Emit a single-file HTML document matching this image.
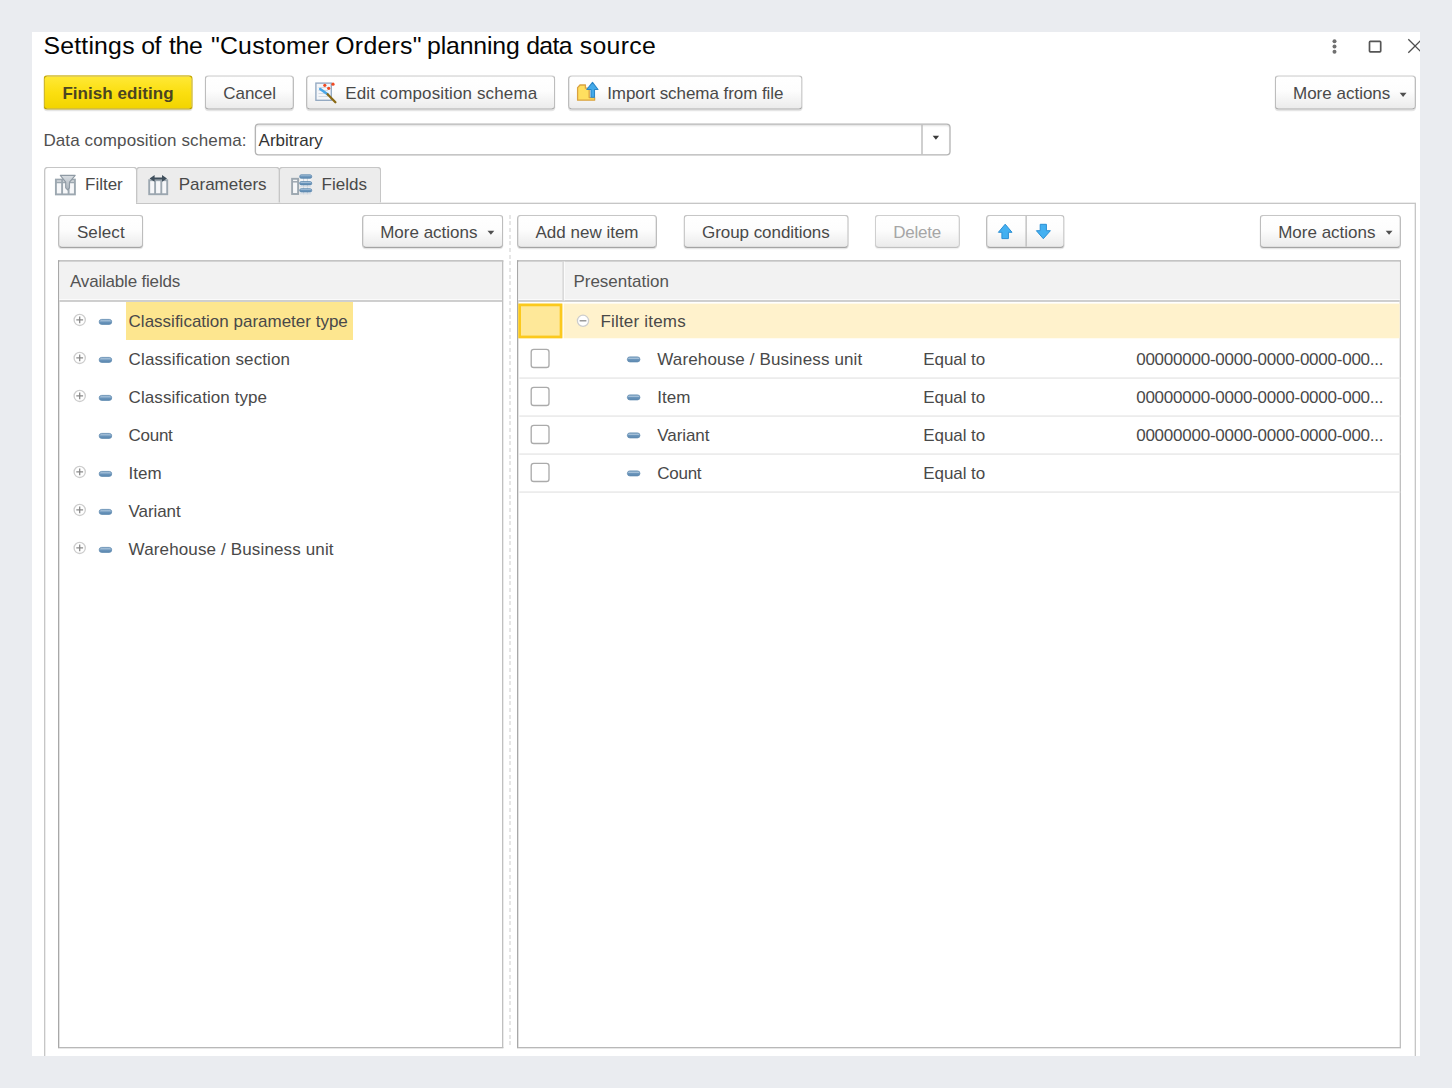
<!DOCTYPE html>
<html>
<head>
<meta charset="utf-8">
<title>Settings of the "Customer Orders" planning data source</title>
<style>
html,body{margin:0;padding:0;}
body{width:1452px;height:1088px;background:#eaecf0;overflow:hidden;position:relative;
  font-family:"Liberation Sans",sans-serif;font-size:17px;color:#494949;}
*{box-sizing:border-box;}
.abs{position:absolute;}
#win{position:absolute;left:32px;top:32px;width:1388px;height:1024px;background:#fff;overflow:hidden;}
#pg{position:absolute;left:-32px;top:-32px;width:1452px;height:1088px;}
#z{position:absolute;left:0;top:0;width:1089px;height:816px;transform:scale(1.3333333);transform-origin:0 0;}
#z>div{position:absolute;}
#tx{position:absolute;left:0;top:0;width:1452px;height:1088px;}
#ic{position:absolute;left:0;top:0;}
.t{position:absolute;white-space:nowrap;line-height:20px;height:20px;}
.t.b{font-weight:bold;}
.title{position:absolute;left:43.4px;top:30.6px;height:30px;line-height:30px;font-size:24.8px;color:#050505;white-space:nowrap;}
.title span{position:absolute;top:0;}
.btn{border:1px solid #bdbdbd;border-top-color:#c6c6c6;border-bottom-color:#a4a4a4;border-radius:3px;background:linear-gradient(#ffffff 0%,#fdfdfd 45%,#ebebeb 100%);box-shadow:0 1px 0.5px rgba(0,0,0,.10);}
.btn.yellow{background:linear-gradient(#ffe836 0%,#fbdf10 50%,#f2d400 100%);border-color:#c6a900;border-bottom-color:#b09500;}
.btn.dis{border-color:#cfcfcf;border-bottom-color:#c0c0c0;box-shadow:0 1px 0.5px rgba(0,0,0,.05);}
.input{border:1px solid #b4b4b4;border-radius:3px;background:#fff;box-shadow:inset 0 1px 1px rgba(0,0,0,.10);}
.tab{border:1px solid #c6c6c6;border-bottom:none;background:#ececec;border-radius:3px 3px 0 0;}
.tab.act{background:#fff;}
.panel{border:1px solid #c6c6c6;}
.tbl{border:1px solid #a8a8a8;border-right-color:#c0c0c0;border-bottom-color:#b8b8b8;background:#fff;}
.th{position:absolute;left:0;top:0;right:0;height:30px;background:#f2f2f2;border-bottom:1px solid #bcbcbc;box-shadow:inset 0 -1px 0 #fbfbfb;}
</style>
</head>
<body>
<div id="win"><div id="pg">
<div id="z">
<div class="btn yellow" style="left:32px;top:56px;width:112px;height:26px;transform:translate(0.6px,0.4px);"></div>
<div class="btn" style="left:153px;top:56px;width:67px;height:26px;transform:translate(0.5px,0.4px);"></div>
<div class="btn" style="left:229px;top:56px;width:187px;height:26px;transform:translate(0.5px,0.4px);"></div>
<div class="btn" style="left:426px;top:56px;width:176px;height:26px;transform:translate(0px,0.4px);"></div>
<div class="btn" style="left:956px;top:56px;width:106px;height:26px;transform:translate(0px,0.4px);"></div>
<div class="input" style="left:191px;top:92px;width:522px;height:24px;transform:translate(0px,0.6px);"><div class="abs" style="left:499px;top:0;width:1px;height:22px;background:#b8b8b8;"></div></div>
<div class="panel" style="left:33px;top:152px;width:1029px;height:700px;"></div>
<div class="tab act" style="left:33px;top:125px;width:70px;height:28px;"></div>
<div class="tab" style="left:102px;top:125px;width:108px;height:27px;"></div>
<div class="tab" style="left:209px;top:125px;width:77px;height:27px;"></div>
<div class="btn" style="left:43px;top:161px;width:64px;height:25px;transform:translate(0.5px,0px);"></div>
<div class="btn" style="left:271px;top:161px;width:106px;height:25px;transform:translate(0.5px,0px);"></div>
<div class="btn" style="left:387px;top:161px;width:105px;height:25px;transform:translate(0.75px,0px);"></div>
<div class="btn" style="left:512px;top:161px;width:124px;height:25px;transform:translate(0.6px,0px);"></div>
<div class="btn dis" style="left:656px;top:161px;width:64px;height:25px;"></div>
<div class="btn" style="left:739px;top:161px;width:59px;height:25px;transform:translate(0.5px,0px);"><div class="abs" style="left:28px;top:0;width:1px;height:23px;background:#bcbcbc;transform:translateX(0.6px);"></div></div>
<div class="btn" style="left:944px;top:161px;width:106px;height:25px;transform:translate(0.75px,0px);"></div>
<div class="tbl" style="left:43px;top:195px;width:334px;height:591px;transform:translate(0.5px,0.25px);"><div class="th"></div></div>
<div class="tbl" style="left:387px;top:195px;width:663px;height:591px;transform:translate(0.75px,0.25px);"><div class="th"><div class="abs" style="left:33px;top:0;width:2px;height:29px;background:linear-gradient(to right,#dadada 0,#dadada 50%,#fbfbfb 50%,#fbfbfb 100%);"></div></div><div class="abs" style="left:34px;top:31px;width:627px;height:26px;background:#fff2cc;transform:translateY(0.45px);"></div><div class="abs" style="left:0;top:31px;width:33px;height:26px;background:#fee899;border:2px solid #fbc91d;transform:translateY(0.45px);"></div></div>
<div class="abs" style="left:382px;top:161px;width:1px;height:625px;background:repeating-linear-gradient(to bottom,#dadada 0,#dadada 3px,transparent 3px,transparent 5px);"></div>
</div>
<div id="tx">
<div class="title"><span style="left:0.0px;letter-spacing:0.22px">Settings</span> <span style="left:97.8px;letter-spacing:-0.5px">of</span> <span style="left:125.7px;letter-spacing:-0.4px">the</span> <span style="left:167.5px;letter-spacing:0.26px">"Customer</span> <span style="left:291.9px;letter-spacing:0.28px">Orders"</span> <span style="left:383.7px;letter-spacing:-0.16px">planning</span> <span style="left:482.9px;letter-spacing:-0.7px">data</span> <span style="left:536.4px;letter-spacing:0.3px">source</span></div>
<div class="abs" style="left:126px;top:302px;width:227px;height:38px;background:#fde68f;"></div>
<div class="t b" style="left:62.4px;top:84px;letter-spacing:0.06px;color:#4b4522;">Finish editing</div>
<div class="t " style="left:223.2px;top:84px;">Cancel</div>
<div class="t " style="left:345.3px;top:84px;letter-spacing:0.13px;">Edit composition schema</div>
<div class="t " style="left:607.2px;top:84px;letter-spacing:-0.06px;">Import schema from file</div>
<div class="t " style="left:1293px;top:84px;">More actions</div>
<div class="t " style="left:43.4px;top:130.6px;letter-spacing:0.12px;color:#505050;">Data composition schema:</div>
<div class="t " style="left:258.6px;top:130.6px;color:#333;">Arbitrary</div>
<div class="t " style="left:85.0px;top:175.4px;">Filter</div>
<div class="t " style="left:178.7px;top:175.4px;">Parameters</div>
<div class="t " style="left:321.6px;top:175.4px;">Fields</div>
<div class="t " style="left:76.9px;top:223.2px;letter-spacing:0.1px;">Select</div>
<div class="t " style="left:380.2px;top:223.2px;">More actions</div>
<div class="t " style="left:535.5px;top:223.2px;">Add new item</div>
<div class="t " style="left:702px;top:223.2px;letter-spacing:-0.05px;">Group conditions</div>
<div class="t " style="left:893.3px;top:223.2px;letter-spacing:-0.27px;color:#a6a6a6;">Delete</div>
<div class="t " style="left:1278.2px;top:223.2px;">More actions</div>
<div class="t " style="left:70px;top:272.4px;letter-spacing:-0.19px;color:#545454;">Available fields</div>
<div class="t " style="left:573.4px;top:272.4px;color:#545454;">Presentation</div>
<div class="t " style="left:128.6px;top:312.4px;">Classification parameter type</div>
<div class="t " style="left:128.6px;top:350.4px;letter-spacing:0.13px;">Classification section</div>
<div class="t " style="left:128.6px;top:388.4px;letter-spacing:0.08px;">Classification type</div>
<div class="t " style="left:128.6px;top:426.4px;letter-spacing:-0.28px;">Count</div>
<div class="t " style="left:128.6px;top:464.4px;">Item</div>
<div class="t " style="left:128.6px;top:502.4px;letter-spacing:-0.08px;">Variant</div>
<div class="t " style="left:128.6px;top:540.4px;letter-spacing:0.14px;">Warehouse / Business unit</div>
<div class="t " style="left:600.4px;top:312px;letter-spacing:0.2px;">Filter items</div>
<div class="t " style="left:657.3px;top:349.6px;letter-spacing:0.14px;">Warehouse / Business unit</div>
<div class="t " style="left:923.2px;top:349.6px;letter-spacing:-0.05px;">Equal to</div>
<div class="t " style="left:1136.2px;top:349.6px;letter-spacing:-0.24px;">00000000-0000-0000-0000-000...</div>
<div class="t " style="left:657.3px;top:387.6px;">Item</div>
<div class="t " style="left:923.2px;top:387.6px;letter-spacing:-0.05px;">Equal to</div>
<div class="t " style="left:1136.2px;top:387.6px;letter-spacing:-0.24px;">00000000-0000-0000-0000-000...</div>
<div class="t " style="left:657.3px;top:425.6px;letter-spacing:-0.08px;">Variant</div>
<div class="t " style="left:923.2px;top:425.6px;letter-spacing:-0.05px;">Equal to</div>
<div class="t " style="left:1136.2px;top:425.6px;letter-spacing:-0.24px;">00000000-0000-0000-0000-000...</div>
<div class="t " style="left:657.3px;top:463.6px;letter-spacing:-0.28px;">Count</div>
<div class="t " style="left:923.2px;top:463.6px;letter-spacing:-0.05px;">Equal to</div>
<svg id="ic" width="1452" height="1088" viewBox="0 0 1452 1088">
<defs><linearGradient id="fu" x1="0" y1="0" x2="0" y2="1"><stop offset="0" stop-color="#d9dee3"/><stop offset="1" stop-color="#a9b2bb"/></linearGradient><linearGradient id="fg" x1="0" y1="0" x2="0" y2="1"><stop offset="0" stop-color="#7ea3c4"/><stop offset="0.3" stop-color="#a9c3db"/><stop offset="0.5" stop-color="#6b96bc"/><stop offset="1" stop-color="#5c88b0"/></linearGradient></defs>
<path d="M1399.7 92.8 H1406.5 L1403.1 96.9 Z" fill="#4f4f4f"/>
<path d="M932.7 135.8 H939.1 L935.9 139.7 Z" fill="#3a3a3a"/>
<path d="M487.5 230.7 H494.3 L490.9 234.8 Z" fill="#4f4f4f"/>
<path d="M1385.7 230.7 H1392.5 L1389.1 234.8 Z" fill="#4f4f4f"/>
<circle cx="79.7" cy="319.90000000000003" r="5.6" fill="#fff" stroke="#cdcdcd" stroke-width="1.3"/>
<path d="M76.3 319.90000000000003H83.10000000000001M79.7 316.50000000000006V323.3" stroke="#8a8a8a" stroke-width="1.3" fill="none"/>
<rect x="99.2" y="319.40000000000003" width="12.5" height="5.0" rx="2.4" fill="url(#fg)" stroke="#5f8ab0" stroke-width="0.8"/>
<circle cx="79.7" cy="357.90000000000003" r="5.6" fill="#fff" stroke="#cdcdcd" stroke-width="1.3"/>
<path d="M76.3 357.90000000000003H83.10000000000001M79.7 354.50000000000006V361.3" stroke="#8a8a8a" stroke-width="1.3" fill="none"/>
<rect x="99.2" y="357.40000000000003" width="12.5" height="5.0" rx="2.4" fill="url(#fg)" stroke="#5f8ab0" stroke-width="0.8"/>
<circle cx="79.7" cy="395.90000000000003" r="5.6" fill="#fff" stroke="#cdcdcd" stroke-width="1.3"/>
<path d="M76.3 395.90000000000003H83.10000000000001M79.7 392.50000000000006V399.3" stroke="#8a8a8a" stroke-width="1.3" fill="none"/>
<rect x="99.2" y="395.40000000000003" width="12.5" height="5.0" rx="2.4" fill="url(#fg)" stroke="#5f8ab0" stroke-width="0.8"/>
<rect x="99.2" y="433.40000000000003" width="12.5" height="5.0" rx="2.4" fill="url(#fg)" stroke="#5f8ab0" stroke-width="0.8"/>
<circle cx="79.7" cy="471.90000000000003" r="5.6" fill="#fff" stroke="#cdcdcd" stroke-width="1.3"/>
<path d="M76.3 471.90000000000003H83.10000000000001M79.7 468.50000000000006V475.3" stroke="#8a8a8a" stroke-width="1.3" fill="none"/>
<rect x="99.2" y="471.40000000000003" width="12.5" height="5.0" rx="2.4" fill="url(#fg)" stroke="#5f8ab0" stroke-width="0.8"/>
<circle cx="79.7" cy="509.90000000000003" r="5.6" fill="#fff" stroke="#cdcdcd" stroke-width="1.3"/>
<path d="M76.3 509.90000000000003H83.10000000000001M79.7 506.50000000000006V513.3000000000001" stroke="#8a8a8a" stroke-width="1.3" fill="none"/>
<rect x="99.2" y="509.40000000000003" width="12.5" height="5.0" rx="2.4" fill="url(#fg)" stroke="#5f8ab0" stroke-width="0.8"/>
<circle cx="79.7" cy="547.9" r="5.6" fill="#fff" stroke="#cdcdcd" stroke-width="1.3"/>
<path d="M76.3 547.9H83.10000000000001M79.7 544.5V551.3" stroke="#8a8a8a" stroke-width="1.3" fill="none"/>
<rect x="99.2" y="547.4" width="12.5" height="5.0" rx="2.4" fill="url(#fg)" stroke="#5f8ab0" stroke-width="0.8"/>
<circle cx="583" cy="320.8" r="5.6" fill="#fff" stroke="#cdcdcd" stroke-width="1.3"/>
<path d="M579.6 320.8H586.4" stroke="#8a8a8a" stroke-width="1.3" fill="none"/>
<rect x="531.2" y="349.29999999999995" width="17.8" height="18.2" rx="2.6" fill="#fff" stroke="#ababab" stroke-width="1.33"/>
<rect x="627.4" y="356.9" width="12.5" height="5.0" rx="2.4" fill="url(#fg)" stroke="#5f8ab0" stroke-width="0.8"/>
<rect x="519.3" y="377.4" width="881" height="1.33" fill="#e6e6e6"/>
<rect x="531.2" y="387.29999999999995" width="17.8" height="18.2" rx="2.6" fill="#fff" stroke="#ababab" stroke-width="1.33"/>
<rect x="627.4" y="394.9" width="12.5" height="5.0" rx="2.4" fill="url(#fg)" stroke="#5f8ab0" stroke-width="0.8"/>
<rect x="519.3" y="415.4" width="881" height="1.33" fill="#e6e6e6"/>
<rect x="531.2" y="425.29999999999995" width="17.8" height="18.2" rx="2.6" fill="#fff" stroke="#ababab" stroke-width="1.33"/>
<rect x="627.4" y="432.9" width="12.5" height="5.0" rx="2.4" fill="url(#fg)" stroke="#5f8ab0" stroke-width="0.8"/>
<rect x="519.3" y="453.4" width="881" height="1.33" fill="#e6e6e6"/>
<rect x="531.2" y="463.29999999999995" width="17.8" height="18.2" rx="2.6" fill="#fff" stroke="#ababab" stroke-width="1.33"/>
<rect x="627.4" y="470.9" width="12.5" height="5.0" rx="2.4" fill="url(#fg)" stroke="#5f8ab0" stroke-width="0.8"/>
<rect x="519.3" y="491.4" width="881" height="1.33" fill="#e6e6e6"/>
<circle cx="1334.5" cy="41.2" r="2" fill="#707070"/><circle cx="1334.5" cy="46.5" r="2" fill="#707070"/><circle cx="1334.5" cy="51.8" r="2" fill="#707070"/>
<rect x="1369.5" y="41.4" width="11.2" height="10.5" rx="0.8" fill="none" stroke="#555" stroke-width="1.7"/>
<path d="M1408.3 39.3 L1421.9 52.7 M1421.9 39.3 L1408.3 52.7" stroke="#505050" stroke-width="1.35" fill="none"/>
<g>
  <rect x="315.9" y="83.1" width="15.4" height="17.2" fill="#f4f6f9" stroke="#93a8c1" stroke-width="1.35"/>
  <path d="M318.5 87.5H328 M318.5 90.5H328 M318.5 93.5H328 M318.5 96.5H328" stroke="#d3dae3" stroke-width="1.2"/>
  <path d="M320.2 89 L327.6 94.3" stroke="#49a7e8" stroke-width="2.6" stroke-linecap="round"/>
  <path d="M327.6 94.3 L335.4 102.3" stroke="#8a6914" stroke-width="2.3" stroke-linecap="round"/>
  <circle cx="324.8" cy="85.3" r="1.6" fill="#f04a23"/><circle cx="328.7" cy="88.3" r="1.6" fill="#f04a23"/><circle cx="333" cy="84.2" r="1.6" fill="#f04a23"/>
</g>
<g>
  <path d="M577.6 100.2 V87.6 L580 85 H585.4 V88.2 H589.2 V97.6 H594.6 V100.2 Z" fill="#ffdf5f" stroke="#d9a241" stroke-width="1.3" stroke-linejoin="round"/>
  <path d="M592.5 82.4 L598 89.5 H594.5 V97.2 H591 V89.5 H586.8 Z" fill="#43aaea" stroke="#2a86c8" stroke-width="1.1" stroke-linejoin="round"/>
</g>
<g>
  <rect x="55.9" y="179.6" width="19" height="14.8" fill="#f6f7f9" stroke="#9ca7b0" stroke-width="1.9"/>
  <path d="M55.9 182.4H75 M62.1 179.6V194.4 M68.6 179.6V194.4" stroke="#9ca7b0" stroke-width="1.9"/>
  <path d="M60.3 175.4 H75.2 L69.5 182.2 V187.8 L67.6 189.8 L65.7 187.8 V182.2 Z" fill="url(#fu)" stroke="#8f9aa4" stroke-width="1.1" stroke-linejoin="round"/>
</g>
<g>
  <rect x="149.2" y="180.2" width="18" height="14" fill="#f6f7f9" stroke="#9ca7b0" stroke-width="1.9"/>
  <path d="M155.1 180.2V194.2 M161.3 180.2V194.2" stroke="#9ca7b0" stroke-width="1.9"/>
  <path d="M149.6 178.4 L154.6 175 V177.4 H162 V175 L167 178.4 L162 181.8 V179.4 H154.6 V181.8 Z" fill="#3f4f5c"/>
</g>
<g>
  <rect x="292.1" y="178.8" width="6" height="15.2" fill="#f6f7f9" stroke="#9ca7b0" stroke-width="1.9"/>
  <path d="M292.1 181.8H298.1" stroke="#9ca7b0" stroke-width="1.5"/>
  <rect x="300" y="178" width="11.2" height="16.2" fill="#f3f5f7"/>
  <path d="M303.6 178V194.4 M307.4 178V194.4 M300 186.8H311.2 M300 193.8H311.2" stroke="#cfd6dd" stroke-width="1"/>
  <rect x="299.7" y="174.8" width="12" height="3.5" rx="1.5" fill="url(#fg)" stroke="#5f8ab0" stroke-width="0.8"/>
  <rect x="299.7" y="181.6" width="12" height="3.3" rx="1.5" fill="url(#fg)" stroke="#5f8ab0" stroke-width="0.8"/>
  <rect x="299.7" y="188.7" width="12" height="3.3" rx="1.5" fill="url(#fg)" stroke="#5f8ab0" stroke-width="0.8"/>
</g>
<g>
  <path d="M1005.2 224.2 L1012 232.3 H1008.4 V238.6 H1001.9 V232.3 H998.4 Z" fill="#43b0f1" stroke="#2a8fd4" stroke-width="1" stroke-linejoin="round"/>
  <path d="M1043.3 238.7 L1036.4 230.7 H1040.2 V224.3 H1046.4 V230.7 H1050.4 Z" fill="#43b0f1" stroke="#2a8fd4" stroke-width="1" stroke-linejoin="round"/>
</g>
</svg>
</div>
</div></div>
</body>
</html>
